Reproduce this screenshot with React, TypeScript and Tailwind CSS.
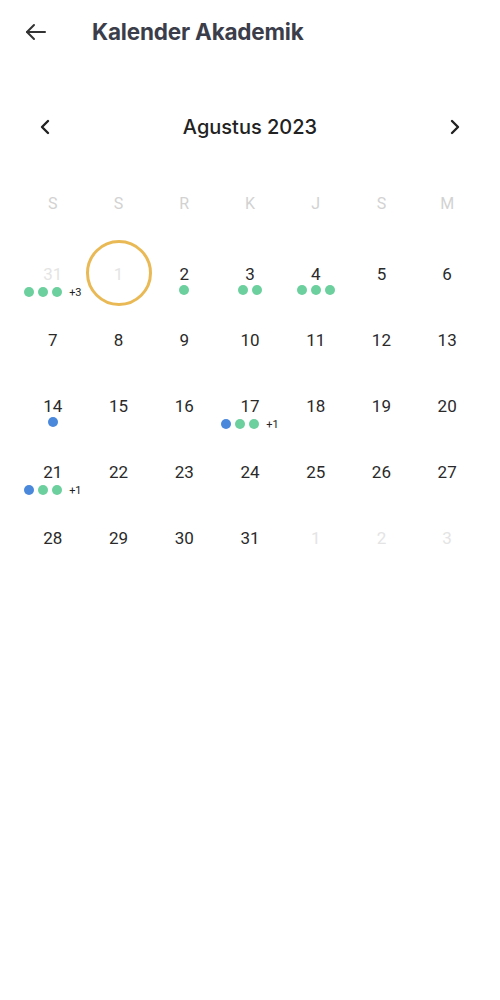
import React from "react";

type Cell = { d: number; faded?: boolean; dots?: string[]; extra?: string; today?: boolean };

const G = "bg-[#6ccf9e]";
const B = "bg-[#4a88dc]";

const rows: Cell[][] = [
  [
    { d: 31, faded: true, dots: [G, G, G], extra: "+3" },
    { d: 1, faded: true, today: true },
    { d: 2, dots: [G] },
    { d: 3, dots: [G, G] },
    { d: 4, dots: [G, G, G] },
    { d: 5 },
    { d: 6 },
  ],
  [{ d: 7 }, { d: 8 }, { d: 9 }, { d: 10 }, { d: 11 }, { d: 12 }, { d: 13 }],
  [
    { d: 14, dots: [B] },
    { d: 15 },
    { d: 16 },
    { d: 17, dots: [B, G, G], extra: "+1" },
    { d: 18 },
    { d: 19 },
    { d: 20 },
  ],
  [
    { d: 21, dots: [B, G, G], extra: "+1" },
    { d: 22 },
    { d: 23 },
    { d: 24 },
    { d: 25 },
    { d: 26 },
    { d: 27 },
  ],
  [
    { d: 28 },
    { d: 29 },
    { d: 30 },
    { d: 31 },
    { d: 1, faded: true },
    { d: 2, faded: true },
    { d: 3, faded: true },
  ],
];

const days = ["S", "S", "R", "K", "J", "S", "M"];

export default function App() {
  return (
    <div className="w-[500px] h-[1000px] bg-white" style={{ fontFamily: "Roboto, 'Noto Sans', sans-serif" }}>
      <div className="h-[64px] flex items-center pl-[24px]">
        <svg width="24" height="24" viewBox="0 0 24 24" fill="none" stroke="#333" strokeWidth="2" strokeLinecap="round" strokeLinejoin="round">
          <path d="M21 12H3" />
          <path d="M10 5l-7 7 7 7" />
        </svg>
        <span className="ml-[44px] text-[22.5px] font-bold text-[#3b3e4a] tracking-[-0.2px]" style={{ fontFamily: "Inter, sans-serif" }}>
          Kalender Akademik
        </span>
      </div>

      <div className="mt-[43px] h-[40px] flex items-center justify-between px-[38px]">
        <svg width="14" height="18" viewBox="0 0 14 18" fill="none" stroke="#222" strokeWidth="2.4" strokeLinecap="round" strokeLinejoin="round">
          <path d="M10 3L4 9l6 6" />
        </svg>
        <span className="text-[20px] font-medium text-[#222]" style={{ fontFamily: "Inter, sans-serif" }}>Agustus 2023</span>
        <svg width="14" height="18" viewBox="0 0 14 18" fill="none" stroke="#222" strokeWidth="2.4" strokeLinecap="round" strokeLinejoin="round">
          <path d="M4 3l6 6-6 6" />
        </svg>
      </div>

      <div className="px-[20px]">
        <div className="mt-[37px] h-[40px] grid grid-cols-7">
          {days.map((d, i) => (
            <div key={i} className="flex items-center justify-center text-[16px] text-[#d2d2d2]">
              {d}
            </div>
          ))}
        </div>
        <div className="mt-[17px]">
          {rows.map((r, ri) => (
            <div key={ri} className="grid grid-cols-7 h-[66px]">
              {r.map((c, ci) => (
                <div key={ci} className="relative flex flex-col items-center pt-[23px]">
                  {c.today && (
                    <div className="absolute left-1/2 top-1/2 -translate-x-1/2 -translate-y-1/2 -mt-[1px] w-[66px] h-[66px] rounded-full border-[3px] border-[#e9b955]" />
                  )}
                  <span className={`text-[17px] leading-[20px] ${c.faded ? "text-[#e4e4e4]" : "text-[#2a2a2a]"}`}>
                    {c.d}
                  </span>
                  {c.dots && (
                    <div className="mt-[1px] flex items-center">
                      <div className="flex gap-[4px]">
                        {c.dots.map((dc, k) => (
                          <span key={k} className={`w-[10px] h-[10px] rounded-full ${dc}`} />
                        ))}
                      </div>
                      {c.extra && (
                        <span className="ml-[7px] text-[11px] leading-[10px] mt-[3px] text-[#222]">{c.extra}</span>
                      )}
                    </div>
                  )}
                </div>
              ))}
            </div>
          ))}
        </div>
      </div>
    </div>
  );
}
